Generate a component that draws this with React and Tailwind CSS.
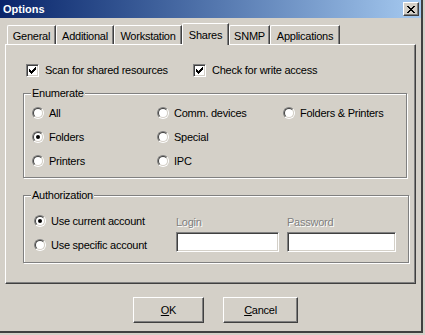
import { useState } from "react";

/* ── Win2k bevel helpers ─────────────────── */
const raised =
  "border-t border-l border-t-white border-l-white border-r border-b border-r-[#404040] border-b-[#404040] shadow-[inset_-1px_-1px_0_#808080]";
const sunken =
  "border-t border-l border-t-[#808080] border-l-[#808080] border-r border-b border-r-white border-b-white shadow-[inset_1px_1px_0_#404040,inset_-1px_-1px_0_#d4d0c8]";
const etched = "border border-[#808080] shadow-[inset_1px_1px_0_#fff,1px_1px_0_#fff]";

function Check({ checked, label, onChange }) {
  return (
    <label className="flex items-center gap-[6px] cursor-default" onClick={onChange}>
      <span className={`w-[13px] h-[13px] bg-white shrink-0 flex items-center justify-center ${sunken}`}>
        {checked && (
          <svg width="7" height="7" viewBox="0 0 7 7" shapeRendering="crispEdges">
            <path
              d="M6 0h1v1H6zM5 1h2v1H5zM0 2h1v1H0zM4 2h3v1H4zM0 3h2v1H0zM3 3h3v1H3zM0 4h5v1H0zM1 5h3v1H1zM2 6h1v1H2z"
              fill="#000"
            />
          </svg>
        )}
      </span>
      <span>{label}</span>
    </label>
  );
}

function Radio({ checked, label, onPick }) {
  return (
    <label className="flex items-center gap-[5px] cursor-default" onClick={onPick}>
      <span className="w-[12px] h-[12px] rounded-full shrink-0 border border-t-[#808080] border-l-[#808080] border-r-white border-b-white">
        <span className="w-full h-full rounded-full bg-white flex items-center justify-center border border-t-[#404040] border-l-[#404040] border-r-[#d4d0c8] border-b-[#d4d0c8]">
          {checked && <span className="w-[4px] h-[4px] rounded-full bg-black" />}
        </span>
      </span>
      <span>{label}</span>
    </label>
  );
}

function Legend({ children }) {
  return (
    <span className="-mt-[7px] ml-[7px] self-start bg-[#d4d0c8] px-[1px] leading-[13px]">{children}</span>
  );
}

const tabs = [
  ["General", "w-[49px]"],
  ["Additional", "w-[58px]"],
  ["Workstation", "w-[68px]"],
  ["Shares", "w-[47px]"],
  ["SNMP", "w-[41px]"],
  ["Applications", "w-[70px]"],
];

export default function App() {
  const [scan, setScan] = useState(true);
  const [write, setWrite] = useState(true);
  const [enumerate, setEnumerate] = useState("Folders");
  const [auth, setAuth] = useState("current");

  const enumOpts = ["All", "Comm. devices", "Folders & Printers", "Folders", "Special", null, "Printers", "IPC", null];

  return (
    <div className="w-[425px] h-[335px] bg-[#d4d0c8] overflow-hidden text-[11px] leading-[13px] tracking-[-0.25px] text-black font-['Liberation_Sans',Arial,sans-serif]">
      <div className="w-[423px] h-[333px] flex flex-col border-r-2 border-b-2 border-[#404040]">
        {/* Title bar */}
        <div className="h-[18px] shrink-0 flex items-center justify-between pl-[3px] pr-[2px] bg-gradient-to-r from-[#0a246a] to-[#a6caf0]">
          <span className="text-white font-bold text-[11px] tracking-normal">Options</span>
          <button className={`w-[16px] h-[14px] bg-[#d4d0c8] flex items-center justify-center ${raised}`}>
            <svg width="8" height="7" viewBox="0 0 8 7" shapeRendering="crispEdges">
              <path d="M0 0h2v1H0zM6 0h2v1H6zM1 1h2v1H1zM5 1h2v1H5zM2 2h4v1H2zM3 3h2v1H3zM2 4h4v1H2zM1 5h2v1H1zM5 5h2v1H5zM0 6h2v1H0zM6 6h2v1H6z" fill="#000" />
            </svg>
          </button>
        </div>

        {/* Tabs */}
        <div className="mt-[5px] ml-[7px] h-[21px] flex items-end">
          {tabs.map(([name, w]) => {
            const sel = name === "Shares";
            return (
              <div
                key={name}
                className={`${w} flex justify-center rounded-tl-[2px] bg-[#d4d0c8] border-t border-l border-t-white border-l-white border-r border-r-[#404040] shadow-[inset_-1px_0_0_#808080] ${
                  sel ? "h-[22px] -mb-[1px] relative z-10 pt-[5px]" : "h-[19px] pt-[4px]"
                }`}
              >
                {name}
              </div>
            );
          })}
        </div>

        {/* Panel */}
        <div className="ml-[5px] w-[411px] h-[240px] flex flex-col border-t border-l border-t-white border-l-white border-r border-b border-r-[#404040] border-b-[#404040] shadow-[inset_-1px_-1px_0_#808080]">
          <div className="mt-[19px] ml-[20px] flex">
            <div className="w-[167px]">
              <Check checked={scan} label="Scan for shared resources" onChange={() => setScan(!scan)} />
            </div>
            <Check checked={write} label="Check for write access" onChange={() => setWrite(!write)} />
          </div>

          {/* Enumerate */}
          <div className={`mt-[16px] ml-[17px] w-[384px] h-[85px] flex flex-col ${etched}`}>
            <Legend>Enumerate</Legend>
            <div className="mt-[1px] pl-[8px] grid grid-cols-[125px_126px_auto] auto-rows-[24px] items-center">
              {enumOpts.map((o, i) =>
                o ? (
                  <Radio key={o} label={o} checked={enumerate === o} onPick={() => setEnumerate(o)} />
                ) : (
                  <span key={i} />
                )
              )}
            </div>
          </div>

          {/* Authorization */}
          <div className={`mt-[17px] ml-[17px] w-[386px] h-[68px] flex flex-col ${etched}`}>
            <Legend>Authorization</Legend>
            <div className="flex pl-[10px]">
              <div className="mt-[7px] w-[142px] flex flex-col">
                <div className="h-[24px] flex items-center">
                  <Radio label="Use current account" checked={auth === "current"} onPick={() => setAuth("current")} />
                </div>
                <div className="h-[24px] flex items-center">
                  <Radio label="Use specific account" checked={auth === "specific"} onPick={() => setAuth("specific")} />
                </div>
              </div>
              <div className="mt-[14px] flex flex-col">
                <span className="text-[#808080] [text-shadow:1px_1px_0_#fff]">Login</span>
                <input disabled className={`mt-[3px] w-[103px] h-[20px] bg-white ${sunken}`} />
              </div>
              <div className="mt-[14px] ml-[8px] flex flex-col">
                <span className="text-[#808080] [text-shadow:1px_1px_0_#fff]">Password</span>
                <input disabled type="password" className={`mt-[3px] w-[109px] h-[20px] bg-white ${sunken}`} />
              </div>
            </div>
          </div>
        </div>

        {/* Buttons */}
        <div className="mt-[13px] pl-[133px] flex gap-[19px]">
          <button className={`w-[71px] h-[26px] bg-[#d4d0c8] flex items-center justify-center ${raised}`}>
            <span><span className="underline">O</span>K</span>
          </button>
          <button className={`w-[75px] h-[26px] bg-[#d4d0c8] flex items-center justify-center ${raised}`}>
            <span><span className="underline">C</span>ancel</span>
          </button>
        </div>
      </div>
    </div>
  );
}
